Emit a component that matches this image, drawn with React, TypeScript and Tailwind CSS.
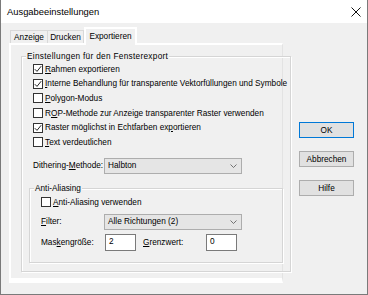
import React from 'react';

const font = { fontFamily: '"Liberation Sans", Arial, sans-serif' };

const Check = ({ checked }: { checked?: boolean }) => (
  <span className="w-[10px] h-[10px] border border-[#333] bg-white flex items-center justify-center shrink-0">
    {checked && (
      <svg width="8" height="8" viewBox="0 0 8 8">
        <path d="M0.8 4.2 L3 6.4 L7.2 1.2" fill="none" stroke="#222" strokeWidth="1" />
      </svg>
    )}
  </span>
);

const CheckRow = ({ checked, children }: { checked?: boolean; children: React.ReactNode }) => (
  <div className="h-[14.6px] flex items-center gap-[2px]">
    <Check checked={checked} />
    <span>{children}</span>
  </div>
);

const Select = ({ value, height }: { value: string; height: string }) => (
  <div className={`w-[138px] ${height} border border-[#adadad] bg-[#e5e5e5] flex items-center justify-between pl-[3px] pr-[4px]`}>
    <span>{value}</span>
    <svg width="7" height="4" viewBox="0 0 7 4">
      <path d="M0.5 0.5 L3.5 3.5 L6.5 0.5" fill="none" stroke="#555" strokeWidth="0.8" />
    </svg>
  </div>
);

const Btn = ({ label, primary }: { label: string; primary?: boolean }) => (
  <div
    className={`w-[55px] h-[16px] flex items-center justify-center bg-[#e1e1e1] border ${
      primary ? 'border-[#0078d7]' : 'border-[#adadad]'
    }`}
  >
    {label}
  </div>
);

const U = ({ children }: { children: React.ReactNode }) => <span className="underline underline-offset-1">{children}</span>;

export default function App() {
  return (
    <div className="w-[368px] h-[295px] bg-[#f0f0f0] border-x border-b border-[#7a7a7a] text-[8.25px] leading-[11px] text-black overflow-hidden whitespace-nowrap" style={font}>
      {/* Title bar */}
      <div className="h-[23px] bg-white flex items-center justify-between pl-[6px] pr-[6px]">
        <span className="text-[9.4px]">Ausgabeeinstellungen</span>
        <svg width="10" height="10" viewBox="0 0 10 10">
          <path d="M0.5 0.5 L9.5 9.5 M9.5 0.5 L0.5 9.5" stroke="#111" strokeWidth="1" />
        </svg>
      </div>

      <div className="flex">
        {/* Tab control */}
        <div className="ml-[8px] mt-[4px]">
          <div className="h-[16px] flex items-end pl-[1px]">
            <div className="w-[38px] h-[13px] border border-b-0 border-[#d9d9d9] flex items-center justify-center">Anzeige</div>
            <div className="w-[36px] h-[13px] border border-b-0 border-l-0 border-[#d9d9d9] flex items-center justify-center">Drucken</div>
            <div className="relative z-10 w-[53px] h-[18px] -mb-[2px] border-2 border-b-0 border-white bg-[#f0f0f0] flex items-start justify-center pt-[2px]">
              Exportieren
            </div>
          </div>
          <div className="w-[274px] h-[240px] border-t-2 border-l-2 border-b-[5px] border-r border-white border-r-[#e3e3e3]">
            {/* Group 1 */}
            <div className="ml-[10px] mt-[11px] w-[270px] h-[216px] border border-[#d5d5d5] shadow-[inset_1px_1px_0_#fff,1px_1px_0_#fff]">
              <div className="-mt-[6px] ml-[4px] px-[1px] w-fit bg-[#f0f0f0] leading-[11px] tracking-[0.3px]">Einstellungen für den Fensterexport</div>
              <div className="ml-[11px]">
                <CheckRow checked><U>R</U>ahmen exportieren</CheckRow>
                <CheckRow checked><U>I</U>nterne Behandlung für transparente Vektorfüllungen und Symbole</CheckRow>
                <CheckRow><U>P</U>olygon-Modus</CheckRow>
                <CheckRow>R<U>O</U>P-Methode zur Anzeige transparenter Raster verwenden</CheckRow>
                <CheckRow checked>Raster möglichst in Echtfarben ex<U>p</U>ortieren</CheckRow>
                <CheckRow><U>T</U>ext verdeutlichen</CheckRow>
                <div className="mt-[8px] flex items-center">
                  <span className="w-[71px]">Dithering-<U>M</U>ethode:</span>
                  <Select value="Halbton" height="h-[16px]" />
                </div>
              </div>
              {/* Group 2 */}
              <div className="ml-[7px] mt-[14px] w-[254px] h-[75px] border border-[#d5d5d5] shadow-[inset_1px_1px_0_#fff,1px_1px_0_#fff]">
                <div className="-mt-[6px] ml-[4px] px-[1px] w-fit bg-[#f0f0f0] leading-[11px]">Anti-Aliasing</div>
                <div className="ml-[11px]">
                  <div className="mt-[1.5px] h-[14px] flex items-center gap-[2px]">
                    <Check />
                    <span><U>A</U>nti-Aliasing verwenden</span>
                  </div>
                  <div className="mt-[4.5px] flex items-center">
                    <span className="w-[63px]"><U>F</U>ilter:</span>
                    <Select value="Alle Richtungen (2)" height="h-[16px]" />
                  </div>
                  <div className="mt-[4px] flex items-center">
                    <span className="w-[64px]">Mas<U>k</U>engröße:</span>
                    <div className="w-[31px] h-[17px] border border-[#7a7a7a] bg-white pl-[3px] pt-[1px]">2</div>
                    <span className="ml-[7px] w-[63px]"><U>G</U>renzwert:</span>
                    <div className="w-[31px] h-[17px] border border-[#7a7a7a] bg-white pl-[3px] pt-[1px]">0</div>
                  </div>
                </div>
              </div>
            </div>
          </div>
        </div>

        {/* Buttons */}
        <div className="ml-[16px] mt-[99px] flex flex-col gap-[13px]">
          <Btn label="OK" primary />
          <Btn label="Abbrechen" />
          <Btn label="Hilfe" />
        </div>
      </div>
    </div>
  );
}
